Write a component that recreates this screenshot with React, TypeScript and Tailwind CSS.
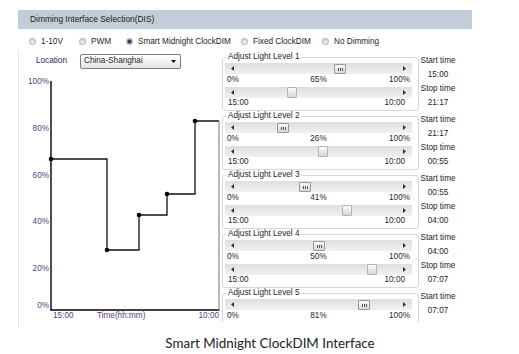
import React from 'react';

// ---------------------------------------------------------------------------
// DATA
// ---------------------------------------------------------------------------

interface Level {
  id: number;
  percent: number;
  levelThumb: number; // px from track start
  timeThumb?: number;
  start: string;
  stop?: string;
}

const LEVELS: Level[] = [
  { id: 1, percent: 65, levelThumb: 109, timeThumb: 62, start: '15:00', stop: '21:17' },
  { id: 2, percent: 26, levelThumb: 52, timeThumb: 93, start: '21:17', stop: '00:55' },
  { id: 3, percent: 41, levelThumb: 74, timeThumb: 117, start: '00:55', stop: '04:00' },
  { id: 4, percent: 50, levelThumb: 88, timeThumb: 142, start: '04:00', stop: '07:07' },
  { id: 5, percent: 81, levelThumb: 133, start: '07:07' },
];

const MODES = [
  { label: '1-10V', width: 'w-[50px]' },
  { label: 'PWM', width: 'w-[47px]' },
  { label: 'Smart Midnight ClockDIM', width: 'w-[115px]', checked: true },
  { label: 'Fixed ClockDIM', width: 'w-[81px]' },
  { label: 'No Dimming', width: 'w-[80px]' },
];

// ---------------------------------------------------------------------------
// SMALL PARTS
// ---------------------------------------------------------------------------

function Radio({ checked }: { checked?: boolean }) {
  return (
    <span className="flex h-[7px] w-[7px] shrink-0 items-center justify-center rounded-full border border-[#a9a9a9] bg-gradient-to-b from-[#d6d6d6] to-[#f4f4f4]">
      {checked && <span className="h-[3px] w-[3px] rounded-full bg-[#1d2a38] ring-1 ring-[#6f8aa6]" />}
    </span>
  );
}

function Arrow({ dir }: { dir: 'left' | 'right' }) {
  return (
    <svg width="3" height="5" viewBox="0 0 3 5" className="shrink-0">
      {dir === 'left' ? <polygon points="3,0 3,5 0,2.5" fill="#333" /> : <polygon points="0,0 0,5 3,2.5" fill="#333" />}
    </svg>
  );
}

function ScrollBar({ thumb, grip }: { thumb: number; grip?: boolean }) {
  return (
    <div className="relative flex h-[11px] w-[187px] items-center justify-between bg-gradient-to-b from-[#dedede] to-[#f1f1f1] px-[6px]">
      <Arrow dir="left" />
      <Arrow dir="right" />
      {grip ? (
        <div
          className="absolute top-[1px] flex h-[10px] w-[12px] items-center justify-center gap-[1px] rounded-[1px] border border-[#999] bg-gradient-to-b from-[#f7f7f7] to-[#d9d9d9]"
          style={{ left: thumb }}
        >
          <span className="h-[3px] w-px bg-[#555]" />
          <span className="h-[3px] w-px bg-[#555]" />
          <span className="h-[3px] w-px bg-[#555]" />
        </div>
      ) : (
        <div
          className="absolute top-0 h-[11px] w-[10px] rounded-[1px] border border-[#b3b3b3] bg-gradient-to-b from-[#fbfbfb] to-[#d6d6d6]"
          style={{ left: thumb }}
        />
      )}
    </div>
  );
}

function LevelRow({ level }: { level: Level }) {
  return (
    <div className="flex">
      <fieldset className="h-[59px] w-[197px] shrink-0 rounded-[3px] border border-[#d3d9e0] pl-[2px]">
        <legend className="ml-[1px] px-[2px] leading-[10px]">Adjust Light Level {level.id}</legend>
        <div className="mt-[1px]">
          <ScrollBar thumb={level.levelThumb} grip />
        </div>
        <div className="grid h-[13px] w-[187px] grid-cols-3 items-center px-[2px]">
          <span>0%</span>
          <span className="text-center">{level.percent}%</span>
          <span className="text-right">100%</span>
        </div>
        {level.timeThumb !== undefined && (
          <>
            <ScrollBar thumb={level.timeThumb} />
            <div className="flex h-[11px] w-[187px] items-center justify-between pl-[3px] pr-[7px]">
              <span>15:00</span>
              <span>10:00</span>
            </div>
          </>
        )}
      </fieldset>
      <div className="w-[38px] pt-[2px] text-center">
        <div className="flex h-[14px] items-center justify-center">Start time</div>
        <div className="flex h-[14px] items-center justify-center">{level.start}</div>
        {level.stop && (
          <>
            <div className="flex h-[14px] items-center justify-center">Stop time</div>
            <div className="flex h-[14px] items-center justify-center">{level.stop}</div>
          </>
        )}
      </div>
    </div>
  );
}

// Step chart: x offset 19, y offset 74 from page
function Chart() {
  const axisLabel = '#5b3c7c';
  const yLabels: [string, number][] = [
    ['100%', 7],
    ['80%', 54],
    ['60%', 101],
    ['40%', 147],
    ['20%', 194],
    ['0%', 231],
  ];
  const dots: [number, number][] = [
    [32, 85],
    [88, 176],
    [120, 141],
    [148, 120],
    [176, 47],
  ];
  return (
    <svg width="201" height="250" viewBox="0 0 201 250" className="block" style={{ fontFamily: '"Liberation Sans", Arial, sans-serif' }}>
      {yLabels.map(([t, y]) => (
        <text key={t} x="30" y={y + 3} textAnchor="end" fontSize="8.2" fill={axisLabel}>
          {t}
        </text>
      ))}
      <line x1="32" y1="7" x2="32" y2="236.5" stroke="#000" strokeWidth="1.4" />
      <line x1="31.5" y1="236" x2="200.5" y2="236" stroke="#000" strokeWidth="1.4" />
      <polyline
        points="32,85 88,85 88,176 120,176 120,141 148,141 148,120 176,120 176,47 200,47"
        fill="none"
        stroke="#111"
        strokeWidth="1.3"
      />
      <line x1="200" y1="47" x2="200" y2="236" stroke="#8a8a8a" strokeWidth="1.2" />
      {dots.map(([x, y]) => (
        <circle key={`${x}-${y}`} cx={x} cy={y} r="2.3" fill="#000" />
      ))}
      <text x="34" y="244" fontSize="8.2" fill={axisLabel}>15:00</text>
      <text x="78" y="244" fontSize="8.2" fill={axisLabel}>Time(hh:mm)</text>
      <text x="200" y="244" fontSize="8.2" fill={axisLabel} textAnchor="end">10:00</text>
    </svg>
  );
}

// ---------------------------------------------------------------------------
// APP
// ---------------------------------------------------------------------------

export default function App() {
  return (
    <div className="h-[354px] w-[519px] overflow-hidden bg-white font-['Liberation_Sans',Arial,sans-serif] text-[8.2px] leading-none text-[#1e1e1e]">
      {/* Header */}
      <div className="pl-[18px] pt-[10px]">
        <div className="flex h-[19px] w-[454px] items-center bg-[#c2cdd9] pl-[12px] text-[8.4px] text-[#1a1a1a]">
          Dimming Interface Selection(DIS)
        </div>
      </div>

      {/* Mode radios */}
      <div className="mt-[8px] flex h-[10px] items-center pl-[29px]">
        {MODES.map((m) => (
          <label key={m.label} className={`flex items-center gap-[5px] ${m.width}`}>
            <Radio checked={m.checked} />
            <span className="whitespace-nowrap">{m.label}</span>
          </label>
        ))}
      </div>

      {/* Main */}
      <div className="mt-[3px] flex pl-[18px]">
        <div className="h-[278px] w-[204px] shrink-0 border-l border-[#e3e3e3]">
          <div className="mt-[4px] flex h-[15px] items-center pl-[17px]">
            <span className="w-[44px] text-[#2a1f5c]">Location</span>
            <div className="flex h-[15px] w-[101px] items-center justify-between rounded-[2px] border border-[#7d7d7d] bg-gradient-to-b from-white to-[#e4e4e4] pl-[3px] pr-[4px]">
              <span>China-Shanghai</span>
              <svg width="5" height="3" viewBox="0 0 5 3">
                <polygon points="0,0 5,0 2.5,3" fill="#111" />
              </svg>
            </div>
          </div>
          <div className="mt-[5px]">
            <Chart />
          </div>
        </div>

        <div className="h-[272px] w-[250px] overflow-hidden pt-[2px]">
          {LEVELS.map((l) => (
            <LevelRow key={l.id} level={l} />
          ))}
        </div>
      </div>

      {/* Caption */}
      <div className="mt-[7px] w-full pl-[21px] text-center font-['Lato',sans-serif] text-[13.4px] font-normal leading-[16px] text-[#222]">
        Smart Midnight ClockDIM Interface
      </div>
    </div>
  );
}
